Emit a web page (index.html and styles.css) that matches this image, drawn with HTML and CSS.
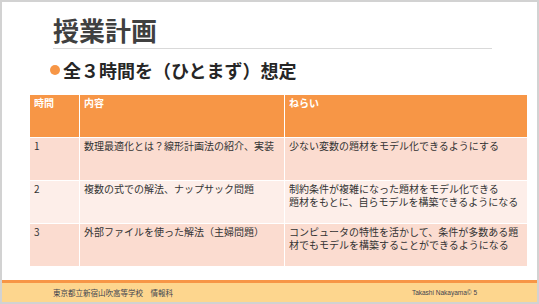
FILE: index.html
```html
<!DOCTYPE html>
<html lang="ja">
<head>
<meta charset="utf-8">
<title>授業計画</title>
<link rel="stylesheet" href="styles.css">
</head>
<body>
<div class="slide">
  <h1 class="title">授業計画</h1>
  <div class="rule"></div>
  <p class="bullet"><span class="dot"></span>全３時間を（ひとまず）想定</p>
  <div class="table">
    <div class="cell head">時間</div>
    <div class="cell head">内容</div>
    <div class="cell head">ねらい</div>

    <div class="cell odd">1</div>
    <div class="cell odd">数理最適化とは？線形計画法の紹介、実装</div>
    <div class="cell odd">少ない変数の題材をモデル化できるようにする</div>

    <div class="cell even">2</div>
    <div class="cell even">複数の式での解法、ナップサック問題</div>
    <div class="cell even lines">制約条件が複雑になった題材をモデル化できる
題材をもとに、自らモデルを構築できるようになる</div>

    <div class="cell odd">3</div>
    <div class="cell odd">外部ファイルを使った解法（主婦問題）</div>
    <div class="cell odd">コンピュータの特性を活かして、条件が多数ある題材でもモデルを構築することができるようになる</div>
  </div>
  <div class="footer">
    <span class="school">東京都立新宿山吹高等学校　情報科</span>
    <span class="credit">Takashi Nakayama© 5</span>
  </div>
</div>
</body>
</html>
```
FILE: styles.css
```css
* { box-sizing: border-box; }
html, body { margin: 0; padding: 0; background: #fff; }
body {
  font-family: "Noto Sans CJK JP", "Noto Sans", sans-serif;
  color: #333;
}
.slide {
  width: 539px;
  height: 304px;
  border: 2px solid #d2d2d2;
  display: flex;
  flex-direction: column;
  background: #fff;
  overflow: hidden;
}
.title {
  margin: 12px 0 0 51px;
  font-size: 26px;
  line-height: 32px;
  font-weight: 700;
  color: #404040;
}
.rule {
  margin: 2px 0 0 51px;
  width: 439px;
  height: 1px;
  background: #d9d9d9;
}
.bullet {
  margin: 9px 0 0 48px;
  font-size: 18px;
  line-height: 24px;
  font-weight: 700;
  color: #262626;
  display: flex;
  align-items: center;
}
.dot {
  width: 10px;
  height: 10px;
  border-radius: 50%;
  background: #f79646;
  margin-right: 3px;
}
.table {
  margin: 13px 0 0 28px;
  width: 497px;
  display: grid;
  grid-template-columns: 49px 204px 242px;
  grid-template-rows: 42px 42px 42px 42px;
  gap: 1px;
  background: #fff;
}
.cell {
  padding: 1px 4px;
  font-size: 10px;
  line-height: 13px;
  color: #333;
}
.lines { white-space: pre-line; }
.head {
  background: #f79646;
  color: #fff;
  font-weight: 700;
}
.odd { background: #fbdcd0; }
.even { background: #fdeee9; }
.footer {
  margin-top: auto;
  height: 22px;
  border-top: 3px solid #f79646;
  background: #fdd68e;
  display: flex;
  align-items: center;
  justify-content: space-between;
  padding: 0 60px 0 51px;
}
.school {
  font-size: 7.5px;
  color: #3d4450;
}
.credit {
  font-family: "Liberation Sans", "Noto Sans", sans-serif;
  font-size: 6.5px;
  color: #3d4450;
}
```
